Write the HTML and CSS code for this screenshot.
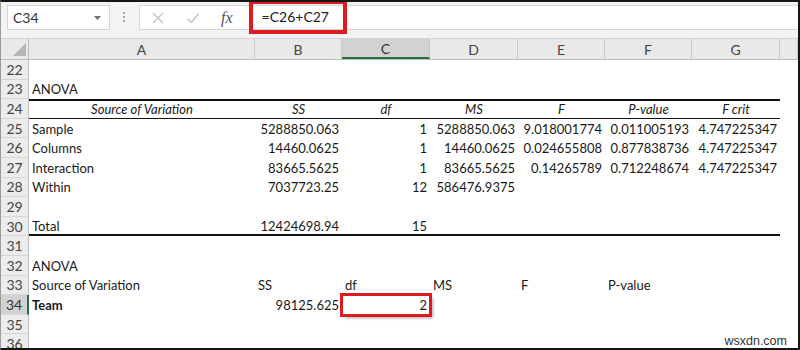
FILE: index.html
```html
<!DOCTYPE html>
<html lang="en">
  <head>
    <meta charset="UTF-8" />
    <title>ANOVA</title>
    <link rel="stylesheet" href="styles.css">
  </head>
  <body>
    <div class="window">
      <div class="toolbar">
        <div class="name-box">
          <span>C34</span>
          <svg class="caret" width="7" height="4" viewBox="0 0 7 4"><path d="M0 0h7L3.5 4z" fill="#707070"/></svg>
        </div>
        <div class="grip"><i></i><i></i><i></i></div>
        <div class="formula-box">
          <svg class="btn" width="14" height="14" viewBox="0 0 14 14"><path d="M2 2l10 10M12 2L2 12" stroke="#c4c4c4" stroke-width="1.4" fill="none"/></svg>
          <svg class="btn" width="14" height="14" viewBox="0 0 14 14"><path d="M1.5 7.5l4 4 7-9" stroke="#c4c4c4" stroke-width="1.4" fill="none"/></svg>
          <span class="fx">fx</span>
          <span class="formula">=C26+C27</span>
        </div>
      </div>

      <div class="sheet">
        <div class="row head">
          <div class="corner"><b></b></div>
          <div class="col">A</div>
          <div class="col">B</div>
          <div class="col active">C</div>
          <div class="col">D</div>
          <div class="col">E</div>
          <div class="col">F</div>
          <div class="col">G</div>
          <div class="col"></div>
        </div>

        <div class="row"><div class="num">22</div></div>
        <div class="row"><div class="num">23</div><div class="cell">ANOVA</div></div>
        <div class="row top-rule">
          <div class="num">24</div>
          <div class="cell c it">Source of Variation</div>
          <div class="cell c it">SS</div>
          <div class="cell c it">df</div>
          <div class="cell c it">MS</div>
          <div class="cell c it">F</div>
          <div class="cell c it">P-value</div>
          <div class="cell c it">F crit</div>
        </div>
        <div class="row">
          <div class="num">25</div>
          <div class="cell">Sample</div>
          <div class="cell r">5288850.063</div>
          <div class="cell r">1</div>
          <div class="cell r">5288850.063</div>
          <div class="cell r">9.018001774</div>
          <div class="cell r">0.011005193</div>
          <div class="cell r">4.747225347</div>
        </div>
        <div class="row">
          <div class="num">26</div>
          <div class="cell">Columns</div>
          <div class="cell r">14460.0625</div>
          <div class="cell r">1</div>
          <div class="cell r">14460.0625</div>
          <div class="cell r">0.024655808</div>
          <div class="cell r">0.877838736</div>
          <div class="cell r">4.747225347</div>
        </div>
        <div class="row">
          <div class="num">27</div>
          <div class="cell">Interaction</div>
          <div class="cell r">83665.5625</div>
          <div class="cell r">1</div>
          <div class="cell r">83665.5625</div>
          <div class="cell r">0.14265789</div>
          <div class="cell r">0.712248674</div>
          <div class="cell r">4.747225347</div>
        </div>
        <div class="row">
          <div class="num">28</div>
          <div class="cell">Within</div>
          <div class="cell r">7037723.25</div>
          <div class="cell r">12</div>
          <div class="cell r">586476.9375</div>
        </div>
        <div class="row"><div class="num">29</div></div>
        <div class="row bottom-rule">
          <div class="num">30</div>
          <div class="cell">Total</div>
          <div class="cell r">12424698.94</div>
          <div class="cell r">15</div>
          <div class="cell"></div>
          <div class="cell"></div>
          <div class="cell"></div>
          <div class="cell"></div>
        </div>
        <div class="row"><div class="num">31</div></div>
        <div class="row"><div class="num">32</div><div class="cell">ANOVA</div></div>
        <div class="row">
          <div class="num">33</div>
          <div class="cell">Source of Variation</div>
          <div class="cell">SS</div>
          <div class="cell">df</div>
          <div class="cell">MS</div>
          <div class="cell">F</div>
          <div class="cell">P-value</div>
        </div>
        <div class="row">
          <div class="num active">34</div>
          <div class="cell bold">Team</div>
          <div class="cell r">98125.625</div>
          <div class="cell r marked">2</div>
        </div>
        <div class="row"><div class="num">35</div></div>
        <div class="row"><div class="num">36</div></div>
      </div>

      <div class="watermark">wsxdn.com</div>
    </div>
  </body>
</html>
```

FILE: styles.css
```css
* {
  margin: 0;
  padding: 0;
  box-sizing: border-box;
}

body {
  background: #fff;
  font-family: Lato, "Liberation Sans", sans-serif;
  color: #1a1a1a;
}

.window {
  position: relative;
  width: 800px;
  height: 350px;
  overflow: hidden;
  border-top: 2px solid #161616;
  border-right: 2px solid #161616;
  border-bottom: 2px solid #161616;
  border-left: 1px solid #9a9a9a;
  background: #fff;
}

/* formula bar */
.toolbar {
  display: flex;
  align-items: flex-start;
  height: 36px;
  padding-top: 3px;
  padding-left: 6px;
  background: #f3f3f3;
}

.name-box {
  display: flex;
  align-items: center;
  justify-content: space-between;
  width: 103px;
  height: 25px;
  padding: 0 8px 0 5px;
  background: #fff;
  border: 1px solid #d6d6d6;
  font-size: 14px;
  color: #333;
}

.grip {
  display: flex;
  flex-direction: column;
  gap: 2px;
  margin: 7px 0 0 13px;
}

.grip i {
  display: block;
  width: 2px;
  height: 2px;
  background: #a8a8a8;
}

.formula-box {
  display: flex;
  align-items: center;
  flex-grow: 1;
  height: 25px;
  margin-left: 14px;
  background: #fff;
  border: 1px solid #d6d6d6;
  border-right: none;
}

.btn {
  margin-left: 11px;
  margin-right: 10px;
}

.btn + .btn {
  margin-left: 11px;
}

.fx {
  margin-left: 11px;
  font-family: "Liberation Serif", serif;
  font-style: italic;
  font-size: 16px;
  color: #555;
}

.formula {
  width: 90px;
  height: 26px;
  margin-left: 20px;
  margin-top: -2px;
  padding-left: 9px;
  line-height: 26px;
  font-size: 14px;
  color: #222;
  outline: 4px solid #dc1a1f;
}

/* grid */
.row {
  display: grid;
  grid-template-columns: 28px 226px 87px 88px 88px 87px 87px 88px 1fr;
  height: 19.6px;
  font-size: 13px;
}

.row.head {
  height: 22px;
  background: #e9e9e9;
  border-top: 1px solid #d4d4d4;
  border-bottom: 1px solid #bdbdbd;
}

.corner {
  position: relative;
  border-right: 1px solid #bdbdbd;
}

.corner b {
  position: absolute;
  right: 2px;
  bottom: 3px;
  width: 0;
  height: 0;
  border-left: 13px solid transparent;
  border-bottom: 13px solid #b5b5b5;
}

.col {
  display: flex;
  align-items: center;
  justify-content: center;
  border-right: 1px solid #c8c8c8;
  font-size: 14px;
  color: #444;
}

.col.active {
  background: #d2d2d2;
  border-bottom: 2px solid #217346;
  color: #333;
}

.num {
  display: flex;
  align-items: center;
  justify-content: center;
  background: #ececec;
  border-right: 1px solid #bdbdbd;
  border-bottom: 1px solid #d6d6d6;
  font-size: 14px;
  color: #444;
}

.num.active {
  background: #d2d2d2;
  border-right: 2px solid #217346;
  color: #333;
}

.cell {
  display: flex;
  align-items: center;
  padding: 0 3px;
  white-space: nowrap;
  font-size: 13px;
}

.cell.r {
  justify-content: flex-end;
}

.cell.c {
  justify-content: center;
}

.it {
  font-style: italic;
}

.bold {
  font-weight: bold;
}

.top-rule .cell {
  border-top: 2px solid #111;
  border-bottom: 1px solid #111;
}

.bottom-rule .cell {
  border-bottom: 2px solid #111;
}

.marked {
  outline: 3px solid #dc1a1f;
  outline-offset: -1px;
  box-shadow: 3px 3px 3px rgba(0, 0, 0, 0.35);
}

.watermark {
  position: absolute;
  right: 9px;
  bottom: 0;
  padding: 0 2px;
  background: #fff;
  font-family: "Liberation Sans", sans-serif;
  font-size: 12.5px;
  color: #333;
}
```
